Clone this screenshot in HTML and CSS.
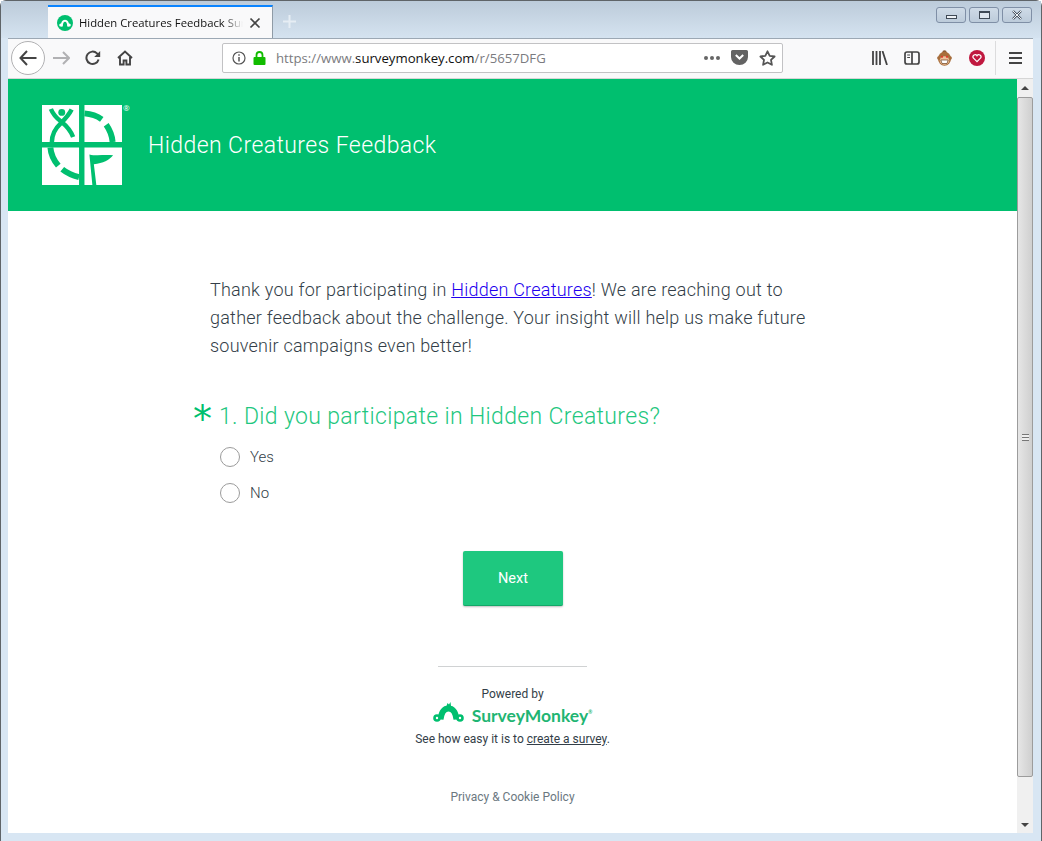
FILE: index.html
```html
<!DOCTYPE html>
<html lang="en">
<head>
    <meta charset="UTF-8">
    <meta name="viewport" content="width=device-width, initial-scale=1.0">
    <title>Hidden Creatures Feedback Survey</title>
    <link rel="stylesheet" href="styles.css">
</head>
<body>
<div class="window">
    <div class="titlebar">
        <div class="tab">
            <svg class="tab-icon" width="16" height="16" viewBox="0 0 16 16">
                <circle cx="8" cy="8" r="8" fill="#00bf6f"/>
                <path d="M4.800 11.500C4.800 7.500 6 5.700 8 5.700s3.200 1.800 3.200 5.800" fill="none" stroke="#fff" stroke-width="2"/>
                <circle cx="3.800" cy="10" r="1.600" fill="#fff"/><circle cx="12.200" cy="10" r="1.600" fill="#fff"/>
            </svg>
            <span class="tab-title">Hidden Creatures Feedback Survey</span>
            <svg class="tab-close" width="12" height="12" viewBox="0 0 12 12"><path d="M1.500 1.500l9 9M10.500 1.500l-9 9" stroke="#444" stroke-width="1.700"/></svg>
        </div>
        <svg class="new-tab" width="15" height="15" viewBox="0 0 15 15"><path d="M7.500 1v13M1 7.500h13" stroke="#e6edf4" stroke-width="2"/></svg>
        <div class="win-controls">
            <div class="win-btn"><span class="win-min"></span></div>
            <div class="win-btn"><span class="win-max"></span></div>
            <div class="win-btn">
                <svg width="12" height="10" viewBox="0 0 12 10"><path d="M2 1l8 8M10 1l-8 8" stroke="#4a5562" stroke-width="2.400"/><path d="M2 1l8 8M10 1l-8 8" stroke="#f4f6f8" stroke-width="1"/></svg>
            </div>
        </div>
    </div>

    <div class="toolbar">
        <div class="back-btn">
            <svg width="18" height="16" viewBox="0 0 18 16"><path d="M8 1L1.500 8 8 15M2 8h15.500" fill="none" stroke="#444" stroke-width="2"/></svg>
        </div>
        <svg class="forward" width="17" height="14" viewBox="0 0 17 14"><path d="M10 1l6 6-6 6M15.500 7H0" fill="none" stroke="#b1b1b3" stroke-width="2"/></svg>
        <svg class="reload" width="16" height="16" viewBox="0 0 16 16"><path d="M13.600 9.500A6.200 6.200 0 1 1 12 3.400l2 2" fill="none" stroke="#444" stroke-width="2"/><path d="M15.200 1v6h-6z" fill="#444"/></svg>
        <svg class="home" width="16" height="16" viewBox="0 0 16 16"><path d="M1 8l7-6.500L15 8M3 7v7.500h3.600v-4h2.800v4H13V7" fill="none" stroke="#444" stroke-width="1.900"/></svg>
        <div class="urlbar">
            <svg class="url-info" width="14" height="14" viewBox="0 0 14 14"><circle cx="7" cy="7" r="6" fill="none" stroke="#555" stroke-width="1.200"/><path d="M7 6v4.500M7 3.200v1.600" stroke="#555" stroke-width="1.500"/></svg>
            <svg class="url-lock" width="13" height="14" viewBox="0 0 13 14"><path d="M3.500 6V4a3 3 0 0 1 6 0v2" fill="none" stroke="#12bc00" stroke-width="1.800"/><rect x="0.500" y="6" width="12" height="8" rx="1" fill="#12bc00"/></svg>
            <span class="url-text">https://www.<b>surveymonkey.com</b>/r/5657DFG</span>
            <span class="url-dots"><i></i><i></i><i></i></span>
            <svg class="url-pocket" width="17" height="15" viewBox="0 0 17 15"><path d="M1.500 0h14A1.500 1.500 0 0 1 17 1.500V7a8.500 8 0 0 1-17 0V1.500A1.500 1.500 0 0 1 1.500 0z" fill="#636363"/><path d="M4.800 5l3.700 3.500L12.200 5" fill="none" stroke="#fff" stroke-width="2"/></svg>
            <svg class="url-star" width="17" height="16" viewBox="0 0 17 16"><path d="M8.500 1.300l2.200 4.500 4.900.7-3.600 3.400.9 4.900-4.400-2.300-4.400 2.300.9-4.900L1.400 6.500l4.900-.7z" fill="none" stroke="#555" stroke-width="1.800" stroke-linejoin="round"/></svg>
        </div>
        <svg class="tool-library" width="16" height="14" viewBox="0 0 16 14"><path d="M1 0v14M4.500 0v14M8 0v14M10.500 0l4.500 14" fill="none" stroke="#444" stroke-width="1.800"/></svg>
        <svg class="tool-sidebar" width="16" height="14" viewBox="0 0 16 14"><rect x="1" y="1" width="14" height="12" rx="2" fill="none" stroke="#444" stroke-width="1.700"/><path d="M8 1v12" stroke="#444" stroke-width="1.700"/><path d="M3.200 4h2.800M3.200 6.500h2.800" stroke="#444" stroke-width="1"/></svg>
        <svg class="tool-monkey" width="15" height="16" viewBox="0 0 15 16">
            <circle cx="7.500" cy="2.500" r="2.200" fill="#8a5a34"/>
            <circle cx="1.800" cy="8" r="1.700" fill="#a36a3c"/><circle cx="13.200" cy="8" r="1.700" fill="#a36a3c"/>
            <ellipse cx="7.500" cy="8.800" rx="6.500" ry="7" fill="#a86e3a"/>
            <ellipse cx="7.500" cy="10.500" rx="4.800" ry="4.300" fill="#eec09a"/>
            <circle cx="5" cy="6.800" r="1.100" fill="#e03a2a"/><circle cx="10" cy="6.800" r="1.100" fill="#e03a2a"/>
            <path d="M3.800 10h7.400l-1.200 3.500H5z" fill="#fff" stroke="#6b4020" stroke-width=".7"/>
        </svg>
        <svg class="tool-pocket" width="16" height="16" viewBox="0 0 16 16"><circle cx="8" cy="8" r="8" fill="#c0183f"/><path d="M8 11.700L4.300 8A2.100 2.100 0 0 1 8 5.800 2.100 2.100 0 0 1 11.700 8z" fill="none" stroke="#fff" stroke-width="1.200"/></svg>
        <span class="tool-sep"></span>
        <svg class="tool-menu" width="13" height="12" viewBox="0 0 13 12"><path d="M0 1h13M0 6h13M0 11h13" stroke="#444" stroke-width="1.800"/></svg>
    </div>

    <div class="viewport">
        <div class="page">
            <header class="survey-header">
                <svg class="logo" width="80" height="80" viewBox="0 0 81 81">
                    <path d="M0 0h37.500v37.500H0zM43 0h38v37.500H43zM0 43h37.500v38H0zM43 43h38v38H43z" fill="#fff"/>
                    <g fill="none" stroke="#00bf6f" stroke-width="6">
                        <path d="M43 8.500c6 .5 12 2 17.500 6"/>
                        <path d="M65 20c3.500 5 6 11 6.500 17.500"/>
                        <path d="M8.500 43c.5 7 3.500 13 8 18.500"/>
                        <path d="M20.500 65c5 4 11 6.500 17 8"/>
                    </g>
                    <g fill="none" stroke="#00bf6f" stroke-width="4.500">
                        <path d="M10 37.500c0-8 3.500-14 9-19 4-4 8-8 11-14"/>
                        <path d="M9 4c2 5 5.500 9 10 12.500 5 4 10 9 12.500 16"/>
                    </g>
                    <circle cx="20" cy="7.500" r="3.500" fill="#00bf6f"/>
                    <path d="M48 50c7 2 15 0 24 1-4 5-10 8-19.500 9L55 81h-4z" fill="#00bf6f"/>
                </svg>
                <span class="reg">®</span>
                <h1 class="survey-title">Hidden Creatures Feedback</h1>
            </header>

            <main class="survey-body">
                <p class="intro">Thank you for participating in <a href="#">Hidden Creatures</a>! We are reaching out to gather feedback about the challenge. Your insight will help us make future souvenir campaigns even better!</p>

                <div class="question">
                    <span class="required">*</span>
                    <h2 class="question-title">1. Did you participate in Hidden Creatures?</h2>
                </div>
                <label class="option"><input type="radio" name="q1"><span>Yes</span></label>
                <label class="option"><input type="radio" name="q1"><span>No</span></label>

                <button class="next-btn">Next</button>
            </main>

            <footer class="survey-footer">
                <hr class="footer-line">
                <p class="powered">Powered by</p>
                <div class="sm-logo">
                    <svg class="sm-mark" width="32" height="21" viewBox="0 0 32 21">
                        <path d="M7.500 17.500C8.500 9.500 11 6.500 15.500 6.500s7 3 8 11" fill="none" stroke="#00bf6f" stroke-width="6"/>
                        <path d="M13.500 4l1-3 1.500 1.500L17.500 0l.5 4z" fill="#00bf6f"/>
                        <circle cx="4" cy="16" r="3.800" fill="#00bf6f"/><circle cx="27" cy="16" r="3.800" fill="#00bf6f"/>
                        <circle cx="4" cy="16" r="1.200" fill="#fff"/><circle cx="27" cy="16" r="1.200" fill="#fff"/>
                    </svg>
                    <span class="sm-name">SurveyMonkey<sup>®</sup></span>
                </div>
                <p class="easy">See how easy it is to <a href="#">create a survey</a>.</p>
                <a class="privacy" href="#">Privacy &amp; Cookie Policy</a>
            </footer>
        </div>
        <div class="scrollbar">
            <span class="arrow-up"></span>
            <div class="thumb"><span class="grip"></span></div>
            <span class="arrow-down"></span>
        </div>
    </div>
</div>
</body>
</html>
```

FILE: styles.css
```css
* {
    box-sizing: border-box;
}
html, body {
    margin: 0;
    padding: 0;
}
body {
    width: 1042px;
    height: 841px;
    overflow: hidden;
    font-family: "Open Sans", sans-serif;
}
.window {
    width: 1042px;
    height: 841px;
    display: flex;
    flex-direction: column;
    padding: 0 8px 8px 7px;
    background: #d8e6f3;
    border: 1px solid #5f6468;
    border-bottom: none;
    border-radius: 6px 6px 0 0;
}
.titlebar {
    height: 37px;
    flex-shrink: 0;
    display: flex;
    align-items: flex-end;
    margin: 0 -8px 0 -7px;
    padding-left: 47px;
    background: linear-gradient(#bccbda, #d5e3f0);
    position: relative;
}
.tab {
    width: 225px;
    height: 33px;
    display: flex;
    align-items: center;
    padding: 0 11px 0 9px;
    background: #f9f9fa;
    border-top: 2px solid #0a84ff;
    border-right: 1px solid #8f9ba6;
    position: relative;
}
.tab-icon {
    flex-shrink: 0;
}
.tab-title {
    flex: 1;
    margin-left: 6px;
    font-size: 11.300px;
    white-space: nowrap;
    overflow: hidden;
    color: #111;
    -webkit-mask-image: linear-gradient(to right, #000 88%, transparent);
    mask-image: linear-gradient(to right, #000 88%, transparent);
}
.tab-close {
    margin-left: 6px;
    flex-shrink: 0;
}
.new-tab {
    margin: 0 0 9px 9px;
}
.win-controls {
    position: absolute;
    top: 6px;
    right: 9px;
    display: flex;
    gap: 3px;
}
.win-btn {
    width: 30px;
    height: 16px;
    display: flex;
    align-items: center;
    justify-content: center;
    border: 1px solid #7f8fa6;
    border-radius: 3px;
    background: linear-gradient(#cfdbe7, #bccbda);
}
.win-min {
    width: 11px;
    height: 4px;
    margin-top: 4px;
    border: 1px solid #3f4a56;
    background: #eef2f6;
}
.win-max {
    width: 11px;
    height: 8px;
    border: 1px solid #3f4a56;
    border-top-width: 2px;
    background: #dfe7ef;
}
.toolbar {
    height: 41px;
    flex-shrink: 0;
    display: flex;
    align-items: center;
    padding-bottom: 2px;
    background: #f9f9fa;
    border-top: 1px solid #9ca8b4;
    border-bottom: 1px solid #d6d6d6;
    position: relative;
}
.back-btn {
    width: 34px;
    height: 34px;
    margin-left: 3px;
    border-radius: 50%;
    border: 1px solid #b1b1b3;
    background: #fff;
    display: flex;
    align-items: center;
    justify-content: center;
    flex-shrink: 0;
}
.forward {
    margin-left: 8px;
}
.reload {
    margin-left: 15px;
}
.home {
    margin-left: 16px;
}
.urlbar {
    width: 561px;
    height: 30px;
    margin-left: 89px;
    display: flex;
    align-items: center;
    background: #fff;
    border: 1px solid #c2c2c4;
    border-radius: 2px;
    flex-shrink: 0;
}
.url-info {
    margin-left: 9px;
}
.url-lock {
    margin-left: 7px;
}
.url-text {
    margin-left: 10px;
    font-size: 13.200px;
    color: #7b7b80;
    white-space: nowrap;
}
.url-text b {
    font-weight: 400;
    color: #111;
}
.url-dots {
    margin-left: auto;
    display: flex;
    gap: 2px;
}
.url-dots i {
    width: 4px;
    height: 4px;
    border-radius: 50%;
    background: #666;
}
.url-pocket {
    margin-left: 11px;
}
.url-star {
    margin: 0 6px 0 11px;
}
.tool-library {
    margin-left: 89px;
}
.tool-sidebar {
    margin-left: 16px;
}
.tool-monkey {
    margin-left: 17px;
}
.tool-pocket {
    margin-left: 17px;
}
.tool-sep {
    width: 1px;
    height: 34px;
    margin-left: 10px;
    background: #dcdcdd;
}
.tool-menu {
    margin-left: 13px;
}
.viewport {
    flex: 1;
    display: flex;
    min-height: 0;
}
.page {
    flex: 1;
    background: #fff;
    min-width: 0;
}
.survey-header {
    height: 132px;
    background: #00bf6f;
    display: flex;
    align-items: center;
    padding-left: 34px;
    position: relative;
}
.logo {
    flex-shrink: 0;
}
.reg {
    position: absolute;
    left: 115px;
    top: 23px;
    font-size: 8px;
    color: #fff;
}
.survey-title {
    margin: 0 0 0 26px;
    font-family: "Roboto", sans-serif;
    font-size: 23px;
    font-weight: 300;
    color: #fff;
    letter-spacing: .42px;
}
.survey-body {
    width: 625px;
    margin: 0 auto;
    padding: 65px 0 0 10px;
    color: #333e48;
    font-family: "Roboto", sans-serif;
}
.intro {
    margin: 0;
    width: 606px;
    font-size: 18px;
    font-weight: 300;
    line-height: 28px;
    letter-spacing: .23px;
}
.intro a {
    color: #2200ee;
}
.question {
    display: flex;
    align-items: flex-start;
    height: 42px;
    margin: 41px 0 0 -17px;
    color: #1fc77f;
}
.required {
    width: 26px;
    font-family: "DejaVu Sans", sans-serif;
    font-size: 38px;
    line-height: 36px;
    color: #00bf6f;
    flex-shrink: 0;
}
.question-title {
    margin: 0;
    font-size: 23px;
    line-height: 32px;
    font-weight: 300;
    letter-spacing: .35px;
}
.option {
    display: flex;
    align-items: center;
    height: 36px;
    margin-left: 10px;
    font-size: 15px;
    font-weight: 300;
}
.question + .option {
    margin-top: -4px;
}
.option input {
    appearance: none;
    width: 20px;
    height: 20px;
    margin: 0 10px 0 0;
    border: 1px solid #9b9b9b;
    border-radius: 50%;
    background: #fff;
}
.next-btn {
    display: block;
    width: 100px;
    height: 55px;
    margin: 40px 0 0 253px;
    padding-top: 2px;
    border: none;
    border-bottom: 1px solid #13a868;
    border-radius: 2px;
    background: #1ec87f;
    color: #fff;
    font-family: "Roboto", sans-serif;
    font-size: 14.500px;
    box-shadow: 0 1px 2px rgba(0, 0, 0, 0.25);
}
.survey-footer {
    display: flex;
    flex-direction: column;
    align-items: center;
    color: #333e48;
    font-family: "Roboto", sans-serif;
}
.footer-line {
    width: 149px;
    margin: 60px 0 0 0;
    border: none;
    border-top: 1px solid #d0d2d3;
}
.powered {
    margin: 20px 0 0 0;
    font-size: 12px;
    line-height: 14px;
}
.sm-logo {
    display: flex;
    align-items: center;
    gap: 7px;
    margin-top: 2px;
    height: 24px;
}
.sm-mark {
    align-self: flex-start;
    margin-top: -1px;
}
.sm-name {
    font-family: "Lato", sans-serif;
    font-size: 17.500px;
    font-weight: 700;
    color: #1fb573;
}
.sm-name sup {
    font-size: 5px;
    vertical-align: 8px;
}
.easy {
    margin: 5px 0 0 0;
    font-size: 12px;
    line-height: 14px;
}
.easy a {
    color: #333e48;
}
.privacy {
    margin-top: 44px;
    font-size: 12px;
    color: #6b787f;
    text-decoration: none;
}
.scrollbar {
    width: 16px;
    flex-shrink: 0;
    display: flex;
    flex-direction: column;
    align-items: center;
    background: #f0f0f0;
    position: relative;
}
.arrow-up {
    margin-top: 7px;
    width: 0;
    height: 0;
    border: 4px solid transparent;
    border-top: none;
    border-bottom: 4px solid #444;
}
.thumb {
    width: 16px;
    height: 680px;
    margin-top: 7px;
    border: 1px solid #9c9c9c;
    border-radius: 2px;
    background: linear-gradient(to right, #e6e6e6, #cfcfcf);
    display: flex;
    align-items: center;
    justify-content: center;
}
.grip {
    width: 7px;
    height: 7px;
    background: repeating-linear-gradient(#777 0 1px, #eee 1px 3px);
}
.arrow-down {
    margin-top: auto;
    margin-bottom: 6px;
    width: 0;
    height: 0;
    border: 4px solid transparent;
    border-bottom: none;
    border-top: 4px solid #444;
}
```
